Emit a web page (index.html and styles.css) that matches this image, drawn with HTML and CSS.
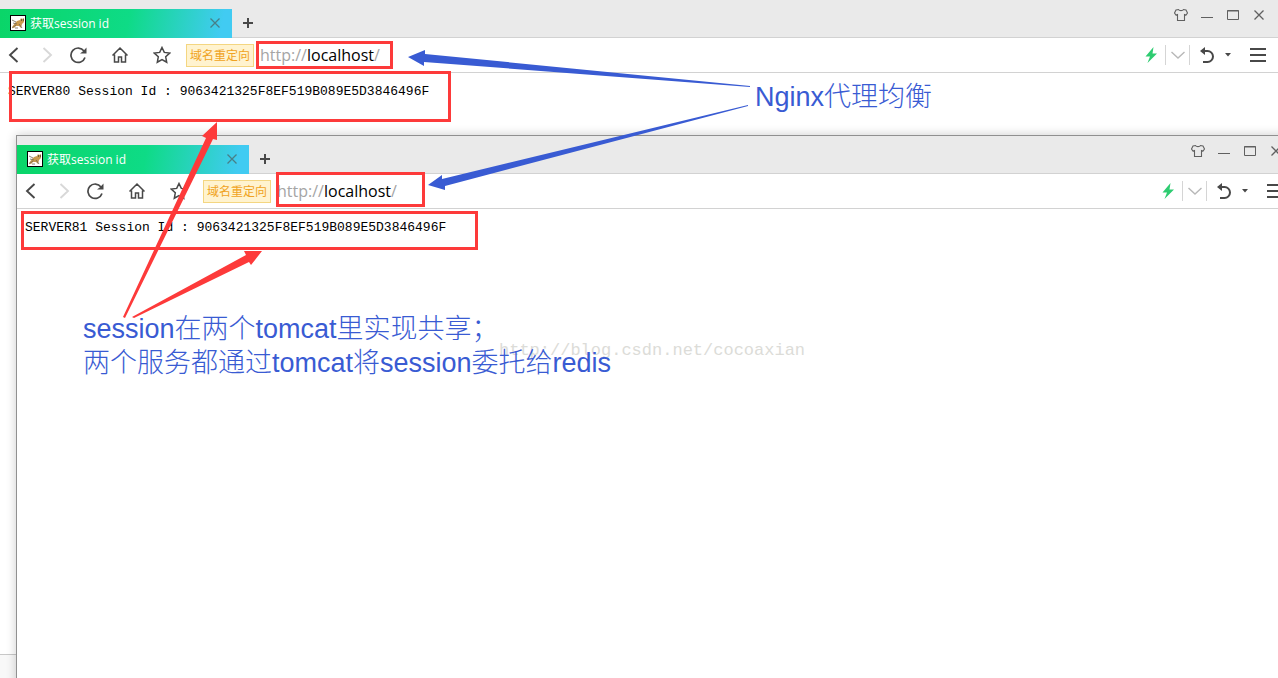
FILE: index.html
```html
<!DOCTYPE html>
<html lang="zh-CN">
<head>
    <meta charset="UTF-8">
    <meta name="viewport" content="width=device-width, initial-scale=1.0">
    <title>获取session id</title>
    <link rel="stylesheet" href="styles.css">
</head>
<body>
    <!-- icons shared by both windows -->
    <svg class="sprite" aria-hidden="true">
        <symbol id="cat" viewBox="0 0 16 16">
            <rect x="0.5" y="0.5" width="15" height="15" fill="#fff" stroke="#000"/>
            <path d="M2 12l3-4 2-2 3-1 1-2 1 1 2-1v4l-2 2-1 4-2-2-3 0-2 2z" fill="#c99a4e"/>
            <path d="M2 5l4 2M3 8l4 1M2 13l4-3M9 9l3 4M5 13h3" stroke="#6d6450" stroke-width="0.800" fill="none"/>
            <path d="M11 5h1M13 5h1" stroke="#222"/>
        </symbol>
        <symbol id="cross" viewBox="0 0 12 12"><path d="M1.500 1.500l9 9M10.500 1.500l-9 9" fill="none" stroke="currentColor" stroke-width="1.300"/></symbol>
        <symbol id="plus" viewBox="0 0 12 12"><path d="M6 1v10M1 6h10" fill="none" stroke="currentColor" stroke-width="2"/></symbol>
        <symbol id="back" viewBox="0 0 18 18"><path d="M12.500 2L5 9l7.500 7" fill="none" stroke="currentColor" stroke-width="1.900"/></symbol>
        <symbol id="forward" viewBox="0 0 18 18"><path d="M6.500 2L14 9l-7.500 7" fill="none" stroke="currentColor" stroke-width="1.900"/></symbol>
        <symbol id="reload" viewBox="0 0 18 18">
            <path d="M15 5A7.200 7.200 0 1 0 16 11.500" fill="none" stroke="currentColor" stroke-width="1.700"/>
            <path d="M17.500 1.500v6h-6.500l3-2.200z" fill="currentColor"/>
        </symbol>
        <symbol id="home" viewBox="0 0 18 18"><path d="M1.500 9.500L9 2l7.500 7.500M3.500 8.500v7.500h4v-5h3v5h4V8.500" fill="none" stroke="currentColor" stroke-width="1.500"/></symbol>
        <symbol id="star" viewBox="0 0 18 18"><path d="M9 1.500l2.300 4.900 5.400.7-4 3.700 1 5.400L9 13.600l-4.700 2.600 1-5.400-4-3.700 5.400-.7z" fill="none" stroke="currentColor" stroke-width="1.500"/></symbol>
        <symbol id="shirt" viewBox="0 0 14 14"><path d="M4.500 1.500c1 1.500 4 1.500 5 0l2.500.5 1.500 3-1.500 2-1.500-.5v6h-7v-6L2 7 .500 5 2 2z" fill="none" stroke="currentColor" stroke-width="1.100"/></symbol>
        <symbol id="minimize" viewBox="0 0 12 12"><path d="M0 8.500h12" stroke="currentColor"/></symbol>
        <symbol id="maximize" viewBox="0 0 12 12"><path d="M.500 1.500h11v9H.500zM0 2h12" fill="none" stroke="currentColor"/></symbol>
        <symbol id="bolt" viewBox="0 0 14 16"><path d="M9.500 0L1.500 9.500h4.500L3.500 16 13 6.500H8.500z" fill="#2ecc71"/></symbol>
        <symbol id="chevron" viewBox="0 0 14 14"><path d="M.500 4l6.500 6 6.500-6" fill="none" stroke="currentColor" stroke-width="1.400"/></symbol>
        <symbol id="undo" viewBox="0 0 16 18">
            <path d="M4 5h4.500a5.500 5.500 0 0 1 0 11H4" fill="none" stroke="currentColor" stroke-width="2"/>
            <path d="M1 5l5-4v8z" fill="currentColor"/>
        </symbol>
        <symbol id="caret" viewBox="0 0 6 4"><path d="M0 0h6L3 3.500z" fill="currentColor"/></symbol>
        <symbol id="menu" viewBox="0 0 16 16"><path d="M0 2h16M0 8h16M0 14h16" stroke="currentColor" stroke-width="2"/></symbol>
    </svg>

    <div class="desktop">
        <!-- first server -->
        <section class="window window-back">
            <header class="titlebar">
                <div class="tab">
                    <svg class="favicon"><use href="#cat"/></svg>
                    <span class="tab-title">获取session id</span>
                    <button class="tab-close" aria-label="关闭标签"><svg width="12" height="12"><use href="#cross"/></svg></button>
                </div>
                <button class="tab-new" aria-label="新标签"><svg width="12" height="12"><use href="#plus"/></svg></button>
                <div class="window-buttons">
                    <button aria-label="皮肤"><svg width="14" height="14"><use href="#shirt"/></svg></button>
                    <button aria-label="最小化"><svg width="12" height="12"><use href="#minimize"/></svg></button>
                    <button aria-label="最大化"><svg width="12" height="12"><use href="#maximize"/></svg></button>
                    <button aria-label="关闭"><svg width="12" height="12"><use href="#cross"/></svg></button>
                </div>
            </header>
            <nav class="toolbar">
                <div class="history">
                    <button aria-label="后退"><svg width="18" height="18"><use href="#back"/></svg></button>
                    <button class="disabled" aria-label="前进"><svg width="18" height="18"><use href="#forward"/></svg></button>
                    <button aria-label="刷新"><svg width="18" height="18"><use href="#reload"/></svg></button>
                </div>
                <button aria-label="主页"><svg width="18" height="18"><use href="#home"/></svg></button>
                <button aria-label="收藏"><svg width="18" height="18"><use href="#star"/></svg></button>
                <span class="badge">域名重定向</span>
                <div class="address" role="textbox" aria-label="地址" contenteditable="true" spellcheck="false">http://<b>localhost</b>/</div>
                <div class="tools">
                    <button aria-label="极速"><svg width="14" height="16"><use href="#bolt"/></svg></button>
                    <button class="split" aria-label="展开"><svg width="14" height="14"><use href="#chevron"/></svg></button>
                    <button class="undo" aria-label="恢复"><svg width="16" height="18"><use href="#undo"/></svg><svg width="6" height="4"><use href="#caret"/></svg></button>
                    <button class="menu" aria-label="菜单"><svg width="16" height="16"><use href="#menu"/></svg></button>
                </div>
            </nav>
            <main class="page">SERVER80 Session Id : 9063421325F8EF519B089E5D3846496F</main>
            <footer class="statusbar"></footer>
        </section>

        <!-- second server -->
        <section class="window window-front">
            <header class="titlebar">
                <div class="tab">
                    <svg class="favicon"><use href="#cat"/></svg>
                    <span class="tab-title">获取session id</span>
                    <button class="tab-close" aria-label="关闭标签"><svg width="12" height="12"><use href="#cross"/></svg></button>
                </div>
                <button class="tab-new" aria-label="新标签"><svg width="12" height="12"><use href="#plus"/></svg></button>
                <div class="window-buttons">
                    <button aria-label="皮肤"><svg width="14" height="14"><use href="#shirt"/></svg></button>
                    <button aria-label="最小化"><svg width="12" height="12"><use href="#minimize"/></svg></button>
                    <button aria-label="最大化"><svg width="12" height="12"><use href="#maximize"/></svg></button>
                    <button aria-label="关闭"><svg width="12" height="12"><use href="#cross"/></svg></button>
                </div>
            </header>
            <nav class="toolbar">
                <div class="history">
                    <button aria-label="后退"><svg width="18" height="18"><use href="#back"/></svg></button>
                    <button class="disabled" aria-label="前进"><svg width="18" height="18"><use href="#forward"/></svg></button>
                    <button aria-label="刷新"><svg width="18" height="18"><use href="#reload"/></svg></button>
                </div>
                <button aria-label="主页"><svg width="18" height="18"><use href="#home"/></svg></button>
                <button aria-label="收藏"><svg width="18" height="18"><use href="#star"/></svg></button>
                <span class="badge">域名重定向</span>
                <div class="address" role="textbox" aria-label="地址" contenteditable="true" spellcheck="false">http://<b>localhost</b>/</div>
                <div class="tools">
                    <button aria-label="极速"><svg width="14" height="16"><use href="#bolt"/></svg></button>
                    <button class="split" aria-label="展开"><svg width="14" height="14"><use href="#chevron"/></svg></button>
                    <button class="undo" aria-label="恢复"><svg width="16" height="18"><use href="#undo"/></svg><svg width="6" height="4"><use href="#caret"/></svg></button>
                    <button class="menu" aria-label="菜单"><svg width="16" height="16"><use href="#menu"/></svg></button>
                </div>
            </nav>
            <main class="page">SERVER81 Session Id : 9063421325F8EF519B089E5D3846496F</main>
        </section>

        <!-- boxes and arrows over the windows -->
        <svg class="marks" aria-hidden="true">
            <g fill="none" stroke="#fd3a3a" stroke-width="3">
                <rect x="257.500" y="42.500" width="134" height="25"/>
                <rect x="10.500" y="72.500" width="439" height="48"/>
                <rect x="277.500" y="173.500" width="146" height="32"/>
                <rect x="22.500" y="212.500" width="454" height="36"/>
            </g>
            <g fill="#fd3a3a">
                <path d="M123 317L206 138l-4-2L217 122v18l-4-1L125 318z"/>
                <path d="M132 317L246 255l-2-4h18l-11 14-2-3L134 318z"/>
            </g>
            <g fill="#395bd3">
                <path d="M750 86L425 54v-4l-17 7 16 9v-4L750 87z"/>
                <path d="M748 105L442 179v-4l-14 10 17 5v-4L748 106z"/>
            </g>
        </svg>
        <p class="watermark">http://blog.csdn.net/cocoaxian</p>
        <p class="note note-nginx">Nginx代理均衡</p>
        <p class="note note-session">session在两个tomcat里实现共享；<br>两个服务都通过tomcat将session委托给redis</p>
    </div>
</body>
</html>
```

FILE: styles.css
```css
body {
    margin: 0;
    background-color: #fff;
    font-family: "Open Sans", "Noto Sans CJK SC", sans-serif;
    font-size: 12px;
}
button {
    display: flex;
    align-items: center;
    justify-content: center;
    flex-shrink: 0;
    padding: 0;
    border: 0;
    background: none;
    color: #484848;
}
.sprite {
    display: none;
}
.desktop {
    position: relative;
    height: 100vh;
    overflow: hidden;
}
.window {
    display: flex;
    flex-direction: column;
    width: 100%;
    height: 100%;
    background-color: #fff;
}
.window-front {
    position: absolute;
    top: 135px;
    left: 16px;
    border: 1px solid #909090;
    box-shadow: 0 0 10px rgba(0, 0, 0, 0.2);
}

/* tabs */
.titlebar {
    display: flex;
    height: 38px;
    background: linear-gradient(#d2d2d2, #d2d2d2) bottom / 100% 1px no-repeat #eaeaea;
}
.tab {
    display: flex;
    align-items: center;
    gap: 4px;
    width: 232px;
    margin-top: 9px;
    padding: 0 11px 2px 10px;
    box-sizing: border-box;
    background: linear-gradient(100deg, #0ad568 0%, #0edb86 55%, #41cbf2 95%);
    color: #fff;
}
.favicon {
    width: 16px;
    height: 16px;
}
.tab-title {
    flex: 1;
}
.tab-close {
    color: #477f88;
}
.tab-new {
    width: 32px;
    margin: 9px 0 2px;
}
.window-buttons {
    display: flex;
    margin-left: auto;
    padding-right: 6px;
}
.window-buttons button {
    width: 26px;
    height: 30px;
    color: #606060;
}

/* address bar */
.toolbar {
    display: flex;
    align-items: center;
    height: 34px;
    border-bottom: 1px solid #d2d2d2;
}
.toolbar button {
    width: 28px;
    height: 28px;
}
.history {
    display: flex;
    gap: 4px;
}
.toolbar > button {
    margin-left: 14px;
}
.toolbar .disabled {
    color: #d8d8d8;
}
.badge {
    margin: 0 6px 0 10px;
    padding: 0 3px;
    border: 1px solid #f4d681;
    background-color: #fff3cf;
    color: #f0a322;
    line-height: 21px;
    white-space: nowrap;
}
.address {
    flex: 1;
    color: #a5a5a5;
    font-size: 16px;
    outline: none;
}
.address b {
    color: #000;
    font-weight: normal;
}
.tools {
    display: flex;
    align-items: center;
    padding-right: 6px;
}
.toolbar .split {
    width: 25px;
    height: 20px;
    border: 1px solid #d5d5d5;
    border-width: 0 1px;
    color: #b8b8b8;
}
.toolbar .undo {
    gap: 10px;
    width: 54px;
    padding-right: 4px;
    box-sizing: border-box;
}

/* page content */
.page {
    flex: 1;
    padding: 8px;
    font-family: "Liberation Mono", monospace;
    font-size: 13px;
    line-height: 22px;
    white-space: nowrap;
}
.statusbar {
    height: 23px;
    border-top: 1px solid #c8c8c8;
    background-color: #f8f8f8;
}

/* annotations */
.marks {
    position: absolute;
    top: 0;
    left: 0;
    width: 100%;
    height: 100%;
    pointer-events: none;
}
.note {
    position: absolute;
    margin: 0;
    color: #395bd3;
    font-family: "Liberation Sans", "Noto Sans CJK SC", sans-serif;
    font-size: 27px;
    font-weight: 300;
    line-height: 34px;
    white-space: nowrap;
}
.note-nginx {
    top: 80px;
    left: 755px;
}
.note-session {
    top: 312px;
    left: 83px;
}
.watermark {
    position: absolute;
    top: 341px;
    left: 499px;
    margin: 0;
    color: #dcdcd8;
    font-family: "Liberation Mono", monospace;
    font-size: 17px;
    line-height: 20px;
}
```
